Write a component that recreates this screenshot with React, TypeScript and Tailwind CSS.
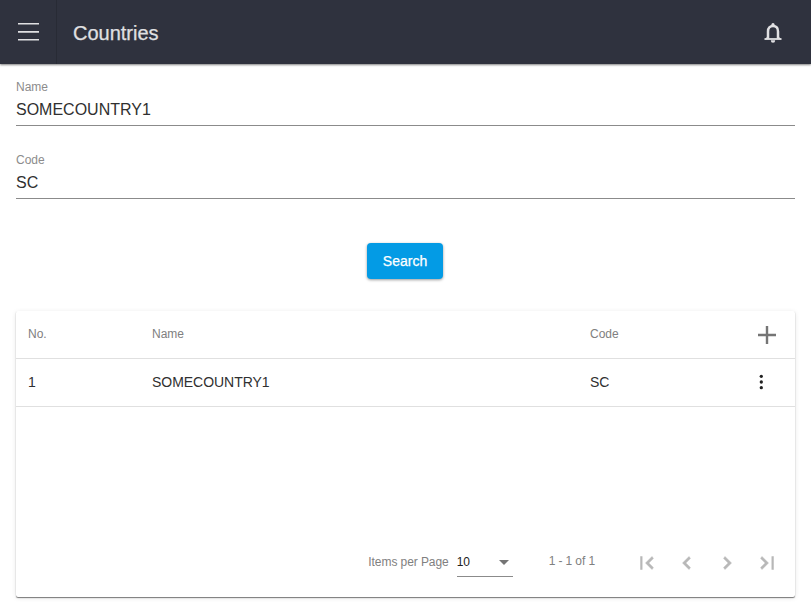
import type { ReactNode } from "react";

function Icon({ d, className = "" }: { d: string; className?: string }) {
  return (
    <svg viewBox="0 0 24 24" width="24" height="24" fill="currentColor" stroke="currentColor" strokeWidth="0.5" className={`shrink-0 ${className}`}>
      <path d={d} />
    </svg>
  );
}

function Field({ label, value }: { label: string; value: string }) {
  return (
    <div className="h-[49px] border-b border-[#8b8b8b]">
      <div className="pt-[2px] text-xs leading-4 text-[#8c8c8c]">{label}</div>
      <div className="pt-[5px] text-base leading-5 text-[#303030]">{value}</div>
    </div>
  );
}

function Row({ cells, action, className }: { cells: string[]; action: ReactNode; className: string }) {
  return (
    <div className={`grid grid-cols-[124px_438px_1fr_auto] items-center border-b border-[#e0e0e0] pl-3 ${className}`}>
      {cells.map((c, i) => (
        <span key={i} className="pb-0.5">{c}</span>
      ))}
      {action}
    </div>
  );
}

export default function App() {
  return (
    <div className="flex h-[613px] w-full flex-col bg-white font-['Liberation_Sans',Arial,sans-serif]">
      <header className="z-10 flex h-16 shrink-0 items-center bg-[#2f323e] text-[#e0e0e2] shadow-[0_1px_2px_rgba(0,0,0,0.5)]">
        <div className="flex h-full w-[57px] items-center border-r border-[#282b35] pl-[18px]">
          <svg width="21" height="18" viewBox="0 0 21 18" fill="currentColor">
            <path d="M0 0h21v1.6H0zM0 8.1h21v1.6H0zM0 16h21v1.6H0z" />
          </svg>
        </div>
        <h1 className="grow pt-0.5 pl-4 text-xl leading-6 [-webkit-text-stroke:0.25px_currentColor]">Countries</h1>
        <svg width="18" height="20" viewBox="0 0 18 20" className="mt-0.5 mr-[29px]" fill="none" stroke="currentColor">
          <path d="M4 15.5V8.4C4 5 6 3 9 3s5 2 5 5.4v7.1" strokeWidth="2.5" />
          <path d="M.6 16.5 3 14h1.8v2zM17.400 16.5 15 14h-1.800v2zM7.2 3a1.8 3 0 0 1 3.600 0zM6.800 17.300h4.400a2.200 2.500 0 0 1-4.400 0z" fill="currentColor" stroke="none" />
          <path d="M.5 16h17" strokeWidth="1.800" />
        </svg>
      </header>
      <main className="flex grow flex-col px-4 pt-[13px] pb-4">
        <div className="flex flex-col gap-6">
          <Field label="Name" value="SOMECOUNTRY1" />
          <Field label="Code" value="SC" />
        </div>
        <button className="mt-11 ml-[351px] h-9 w-[76px] shrink-0 rounded bg-[#039be5] text-sm text-white shadow-[0_1px_3px_rgba(0,0,0,0.4)] [-webkit-text-stroke:0.25px_currentColor]">
          Search
        </button>
        <section className="mt-8 flex h-[286px] flex-col rounded-[2px] bg-white shadow-[0_1px_1px_rgba(0,0,0,0.5),0_1px_5px_rgba(0,0,0,0.1)]">
          <Row
            cells={["No.", "Name", "Code"]}
            className="h-12 text-xs text-[#808080]"
            action={
              <svg width="18" height="18" viewBox="0 0 18 18" fill="#757575" className="mr-[19px]">
                <path d="M7.8 0h2.400v7.800H18v2.400h-7.800V18H7.800v-7.800H0V7.800h7.800z" />
              </svg>
            }
          />
          <Row
            cells={["1", "SOMECOUNTRY1", "SC"]}
            className="h-12 text-sm tracking-[-0.04px] text-[#303030]"
            action={
              <svg width="4" height="16" viewBox="0 0 4 16" fill="#212121" className="mr-8 mb-0.5">
                <circle cx="2.3" cy="2.3" r="1.65" />
                <circle cx="2.3" cy="8" r="1.65" />
                <circle cx="2.3" cy="13.7" r="1.65" />
              </svg>
            }
          />
          <footer className="mt-auto flex h-[70px] items-center justify-end pr-4 text-xs text-[#808080]">
            <span className="mr-2 tracking-[-0.08px]">Items per Page</span>
            <div className="mr-9 mb-0.5 flex h-[31px] w-14 items-center justify-between border-b border-[#8b8b8b] pt-1 text-[#212121]">
              <span className="pb-0.5">10</span>
              <svg width="10" height="5" viewBox="0 0 10 5" className="mr-1 text-[#757575]" fill="currentColor">
                <path d="M0 0h10L5 5z" />
              </svg>
            </div>
            <span className="mr-10 mb-0.5 tracking-[-0.1px]">1 - 1 of 1</span>
            <div className="flex gap-4 pt-0.5 text-[#b8b8b8]">
              <Icon d="M18.41 16.59L13.82 12l4.59-4.59L17 5.500l-6.500 6.500 6.500 6.500zM5.500 5.500h1.700v13H5.500z" />
              <Icon d="M15.41 7.41L14 5.500 7.500 12l6.500 6.500 1.410-1.910L10.83 12z" />
              <Icon d="M10 5.500L8.59 7.41 13.17 12l-4.580 4.590L10 18.500l6.500-6.500z" />
              <Icon d="M5.59 7.41L10.18 12l-4.590 4.590L7 18.500l6.500-6.500L7 5.500zM16.800 5.500h1.700v13h-1.700z" />
            </div>
          </footer>
        </section>
      </main>
    </div>
  );
}
